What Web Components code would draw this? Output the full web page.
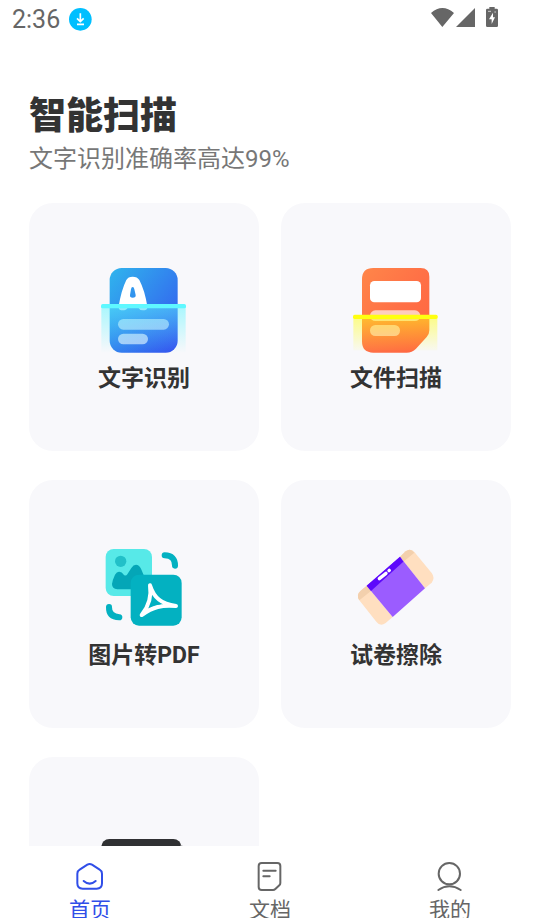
<!DOCTYPE html>
<html lang="zh-CN">
<head>
<meta charset="utf-8">
<meta name="viewport" content="width=device-width, initial-scale=1">
<title>智能扫描</title>
<style>
html, body { height: 100%; margin: 0; }
body { background: #fff; color: #333; font-family: Roboto, "Noto Sans CJK SC", sans-serif; overflow: hidden; }
svg { display: block; width: 100%; height: 100%; }
</style>
</head>
<body>
<scan-app>
  <status-bar slot="status" time="2:36"></status-bar>
  <page-heading>
    <span slot="title">智能扫描</span>
    <span slot="subtitle">文字识别准确率高达99%</span>
  </page-heading>
  <feature-grid>
    <feature-card>
      <svg slot="icon" viewBox="33 36 258 258" aria-hidden="true">
        <defs>
          <linearGradient id="a1" x1="0" y1="0" x2="1" y2="1"><stop stop-color="#30b5ed"/><stop offset="1" stop-color="#3450ef"/></linearGradient>
          <linearGradient id="a2" x1="0" y1="0" x2="0" y2="1"><stop stop-color="#5df5ff" stop-opacity=".5"/><stop offset="1" stop-color="#5df5ff" stop-opacity="0"/></linearGradient>
        </defs>
        <rect x="59" y="39" width="204" height="254" rx="36" fill="url(#a1)"/>
        <path fill="#fff" fill-rule="evenodd" d="M86 154Q94 105 109 75Q114 65 128 65Q142 65 148 75Q164 105 172 154ZM128 96Q124 96 123 103L120 120Q119 128 128 128Q138 128 137 120L133 103Q132 96 128 96Z"/>
        <path fill="#fff" fill-opacity=".7" d="M86 158H113Q109 166 98 166Q87 166 86 158ZM145 158H172Q171 166 159 166Q149 166 145 158Z"/>
        <rect x="84" y="192" width="153" height="32" rx="16" fill="#fff" fill-opacity=".55"/>
        <rect x="84" y="236" width="90" height="32" rx="16" fill="#fff" fill-opacity=".6"/>
        <rect x="34" y="156" width="253" height="138" fill="url(#a2)"/>
        <rect x="33" y="147" width="255" height="13" rx="5" fill="#5ff8ff"/>
      </svg>
      文字识别
    </feature-card>
    <feature-card>
      <svg slot="icon" viewBox="39 36 258 258" aria-hidden="true">
        <defs>
          <linearGradient id="b1" x1="0" y1="0" x2="1" y2="1"><stop stop-color="#ff8649"/><stop offset=".5" stop-color="#ff7046"/><stop offset="1" stop-color="#ff6540"/></linearGradient>
          <linearGradient id="b2" x1="0" y1="0" x2="0" y2="1"><stop stop-color="#ffff17" stop-opacity=".5"/><stop offset="1" stop-color="#ffff17" stop-opacity="0.05"/></linearGradient>
        </defs>
        <path d="M100 39H242Q268 39 268 65V226Q268 238 260 246L228 281Q216 293 200 293H100Q66 293 66 259V73Q66 39 100 39Z" fill="url(#b1)"/>
        <rect x="90" y="78" width="153" height="64" rx="13" fill="#fff"/>
        <rect x="90" y="166" width="151" height="32" rx="16" fill="#fff" fill-opacity=".65"/>
        <rect x="90" y="210" width="90" height="33" rx="16" fill="#fff" fill-opacity=".55"/>
        <rect x="40" y="188" width="252" height="98" fill="url(#b2)"/>
        <rect x="39" y="179" width="254" height="13" rx="5" fill="#ffff10"/>
      </svg>
      文件扫描
    </feature-card>
    <feature-card>
      <svg slot="icon" viewBox="63 27 258 258" aria-hidden="true">
        <rect x="77" y="42" width="139" height="141" rx="24" fill="#57e9e8"/>
        <circle cx="122" cy="79" r="17" fill="#22c0c8"/>
        <path d="M96 147Q97 136 105 119Q111 109 118 110Q125 110 132 120Q138 124 142 118L154 99Q160 89 168 89Q177 89 183 101L195 130V163H112Q96 162 96 147Z" fill="#04a6b7"/>
        <rect x="152" y="119" width="153" height="153" rx="25" fill="#03b1c1"/>
        <path d="M210 151C222 188 243 207 288 213C245 209 219 216 185 240C207 213 215 183 210 151Z" fill="none" stroke="#fff" stroke-width="12" stroke-linejoin="round"/>
        <path d="M219 190Q228 204 243 208Q226 209 211 215Q218 205 219 190Z" fill="#03b1c1"/>
        <path d="M254 61Q286 62 285 92M87 216Q86 245 118 247" fill="none" stroke="#03b1c1" stroke-width="18" stroke-linecap="round"/>
      </svg>
      图片转PDF
    </feature-card>
    <feature-card>
      <svg slot="icon" viewBox="39 27 258 258" aria-hidden="true">
        <path d="M80 152L62 167Q47 180 58 196L109 260Q121 276 136 265L158 246Z" fill="#ffdfc0"/>
        <path d="M180 65L197 49Q211 38 223 51L275 114Q286 128 275 143L255 160Z" fill="#ffdfc0"/>
        <path d="M80 152L62 167Q47 180 58 196L93 168Z" fill="#f3d0ad"/>
        <path d="M180 65L197 49Q211 38 223 53L190 80Z" fill="#f3d0ad"/>
        <path d="M80 152L180 65L255 160L158 246Z" fill="#9b5cff"/>
        <path d="M80 152L180 65L190 80L93 168Z" fill="#5d08fb"/>
        <path d="M118 131L138 115M147 107L148 106" stroke="#fff" stroke-width="10" stroke-linecap="round"/>
      </svg>
      试卷擦除
    </feature-card>
    <feature-card>
      <svg slot="icon" viewBox="243 243 258 258" aria-hidden="true">
        <rect x="244" y="297" width="240" height="150" rx="24" fill="#303133"/>
        <path d="M480 317Q488 312 492 325V340H480Z" fill="#a7a9ab"/>
      </svg>
    </feature-card>
  </feature-grid>
  <tab-bar slot="tabs">
    <tab-item href="#home" active>
      <svg slot="icon" viewBox="42 30 96 96" fill="none" stroke="currentColor" stroke-width="6" stroke-linecap="round" stroke-linejoin="round" aria-hidden="true">
        <path d="M82 44Q89 40 96 44L119 59Q126 63 126 71V100Q126 116 110 116H68Q52 116 52 100V71Q52 63 59 59ZM71 93Q89 109 107 93"/>
      </svg>
      首页
    </tab-item>
    <tab-item href="#documents">
      <svg slot="icon" viewBox="72 60 96 96" fill="none" stroke="currentColor" stroke-width="6" stroke-linecap="round" stroke-linejoin="round" aria-hidden="true">
        <path d="M95 69H142Q151 69 151 78V129Q151 133 148 136L136 147Q133 150 129 150H95Q86 150 86 141V78Q86 69 95 69ZM100 92H137M100 109H119"/>
      </svg>
      文档
    </tab-item>
    <tab-item href="#me">
      <svg slot="icon" viewBox="612 60 96 96" fill="none" stroke="currentColor" stroke-width="6" stroke-linecap="round" aria-hidden="true">
        <circle cx="658" cy="101" r="32"/><path d="M625 150Q658 128 692 150"/>
      </svg>
      我的
    </tab-item>
  </tab-bar>
</scan-app>
<script>
const define = (name, html, setup) => {
  const template = document.createElement('template');
  template.innerHTML = html;
  customElements.define(name, class extends HTMLElement {
    constructor() {
      super();
      this.attachShadow({ mode: 'open' }).append(template.content.cloneNode(true));
    }
    connectedCallback() {
      if (setup) setup(this, this.shadowRoot);
    }
  });
};

define('scan-app', `
<style>
:host { display: flex; flex-direction: column; height: 100vh; overflow: hidden; }
main { flex: 1; min-height: 0; overflow: hidden; padding: 54px 29px 0; }
</style>
<slot name="status"></slot><main><slot></slot></main><slot name="tabs"></slot>`);

define('status-bar', `
<style>
:host { display: flex; align-items: center; height: 38px; padding: 0 41px 0 12px; gap: 9px; color: #666; font-size: 25px; line-height: 38px; }
.time { padding-top: 2px; }
.badge { width: 23px; height: 23px; }
.signals { width: 68px; height: 24px; margin-left: auto; }
</style>
<span class="time"></span>
<svg class="badge" viewBox="0 0 69 69" aria-hidden="true">
  <circle cx="34" cy="34" r="34" fill="#00bfff"/>
  <path d="M34 16V40M24 31L34 41L44 31M24 49H45" fill="none" stroke="#fff" stroke-width="5"/>
</svg>
<svg class="signals" viewBox="93 21 204 72" fill="#666" aria-hidden="true">
  <path d="M93 39Q127 9 162 39L127 81ZM168 81L225 24V81Z"/>
  <path fill-rule="evenodd" d="M268 26V21H284V26H290Q294 26 294 30V77Q294 81 290 81H262Q258 81 258 77V30Q258 26 262 26ZM279 38L267 58H275V72L285 52H279Z"/>
  <path d="M264 34H273M283 36H288" stroke="#fff" stroke-width="2"/>
</svg>`, (host, root) => { root.querySelector('.time').textContent = host.getAttribute('time'); });

define('page-heading', `
<style>
:host { display: block; }
h1 { margin: 0; font: 900 37px/42px "Noto Sans CJK SC", sans-serif; color: #333; }
p { margin: 10px 0 0; font-size: 24px; line-height: 30px; color: #777; }
</style>
<h1><slot name="title"></slot></h1><p><slot name="subtitle"></slot></p>`);

define('feature-grid', `
<style>
:host { display: grid; grid-template-columns: 1fr 1fr; gap: 29px 22px; margin-top: 29px; }
</style>
<slot></slot>`);

define('feature-card', `
<style>
:host { display: block; }
button { display: flex; flex-direction: column; align-items: center; width: 100%; padding: 64px 0 58px; border: 0; border-radius: 24px; background: #f8f8fb; color: #333; font: 700 23px/28px Roboto, "Noto Sans CJK SC", sans-serif; }
.icon { width: 86px; height: 86px; }
.label { min-height: 28px; margin-top: 12px; }
</style>
<button type="button"><span class="icon"><slot name="icon"></slot></span><span class="label"><slot></slot></span></button>`);

define('tab-bar', `
<style>
:host { display: block; flex: none; height: 72px; overflow: hidden; background: #fff; }
nav { display: grid; grid-template-columns: repeat(3, 1fr); }
</style>
<nav><slot></slot></nav>`);

define('tab-item', `
<style>
:host { display: block; }
a { display: flex; flex-direction: column; align-items: center; padding-top: 14px; gap: 6px; color: #666; text-decoration: none; font-size: 21px; line-height: 24px; }
:host([active]) a { color: #304ee8; }
.icon { width: 32px; height: 32px; }
</style>
<a><span class="icon"><slot name="icon"></slot></span><span><slot></slot></span></a>`, (host, root) => {
  const link = root.querySelector('a');
  link.href = host.getAttribute('href');
  if (host.hasAttribute('active')) link.setAttribute('aria-current', 'page');
});
</script>
</body>
</html>
